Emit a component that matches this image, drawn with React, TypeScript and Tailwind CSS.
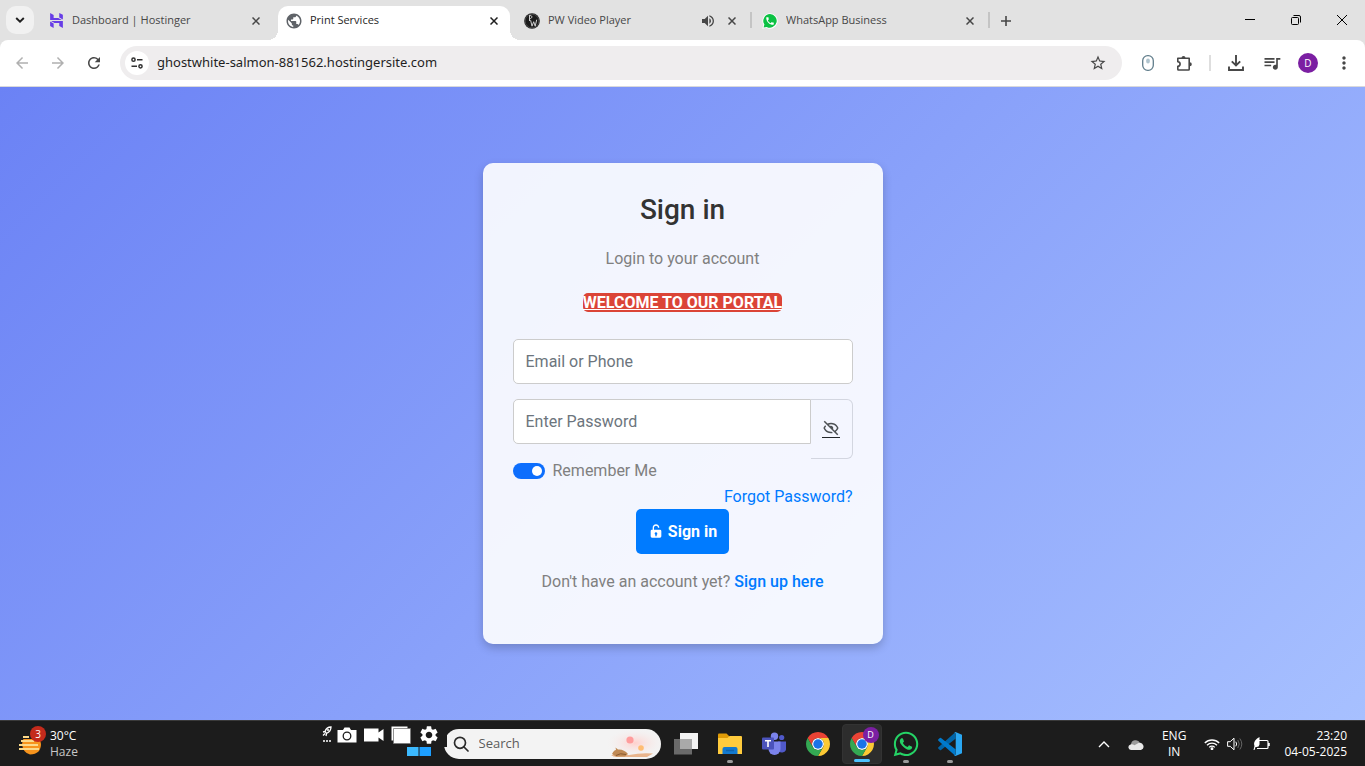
import { useState } from "react";
import type { ReactNode } from "react";
import { clsx } from "clsx";
import { BiHide, BiShow, BiSolidLockOpen } from "react-icons/bi";
import { FaWhatsapp } from "react-icons/fa";
import {
  MdArrowBack,
  MdArrowForward,
  MdMoreVert,
  MdPhone,
  MdPublic,
  MdQueueMusic,
  MdRefresh,
  MdSettings,
  MdStarBorder,
  MdVolumeUp,
} from "react-icons/md";
import { SiHostinger } from "react-icons/si";

interface TabProps {
  title: string;
  icon: ReactNode;
  active?: boolean;
  audible?: boolean;
}

function Tab({ title, icon, active, audible }: TabProps) {
  return (
    <div
      className={clsx(
        "relative flex h-[34px] min-w-0 flex-[0_1_232px] items-center px-2 pb-[5px]",
        active ? "rounded-t-[10px] bg-white text-[#1f1f1f]" : "text-[#474747]"
      )}
    >
      {active && (
        <>
          <span className="absolute bottom-0 -left-2.5 size-2.5 bg-[radial-gradient(circle_at_0_0,transparent_10px,white_10px)]" />
          <span className="absolute -right-2.5 bottom-0 size-2.5 bg-[radial-gradient(circle_at_100%_0,transparent_10px,white_10px)]" />
        </>
      )}
      <span className="flex size-4 flex-none items-center justify-center">{icon}</span>
      <span className="ml-2 flex-1 truncate text-[11px]">{title}</span>
      {audible && <MdVolumeUp className="mr-2 size-4 flex-none" />}
      <button aria-label={`Close ${title}`} className="flex size-4 flex-none items-center justify-center">
        <svg viewBox="0 0 8 8" className="size-2">
          <path d="m.5.5 7 7m0-7-7 7" stroke="currentColor" strokeWidth="1.5" />
        </svg>
      </button>
    </div>
  );
}

function TabDivider({ hidden }: { hidden?: boolean }) {
  return (
    <div className="flex h-[34px] w-1.5 flex-none justify-center pb-[5px]">
      <span className={clsx("mt-1.5 h-4 w-0.5", hidden ? "bg-transparent" : "bg-[#c4c4c4]")} />
    </div>
  );
}

function PwIcon() {
  return (
    <svg viewBox="0 0 16 16" className="size-4 flex-none">
      <circle cx="8" cy="8" r="7.800" fill="#1b1b1b" />
      <circle cx="8" cy="8" r="6.900" fill="none" stroke="#777" strokeWidth=".5" />
      <path d="M5.500 2.500v5.500M5 2.700c3.500-1 4 2.700.5 3.100M6.600 7.200l1.400 6 1.700-4.500 1.500 4.500 1.500-6.500" fill="none" stroke="#d0d0d0" strokeWidth="1" />
    </svg>
  );
}

function WhatsAppFavicon() {
  return (
    <span className="relative flex size-4 items-center justify-center">
      <svg viewBox="0 0 16 16" className="absolute inset-0 size-4">
        <path d="M8 .3a7.700 7.700 0 1 1-3.600 14.500L.3 15.800l1.100-4A7.700 7.700 0 0 1 8 .3z" fill="#fff" />
        <path d="M8 1.100a6.800 6.800 0 1 1-3.300 12.800l-3.100.7.800-3A6.800 6.800 0 0 1 8 1.100z" fill="#0bc143" />
      </svg>
      <MdPhone className="relative size-[10px] text-white" />
    </span>
  );
}

function TabStrip() {
  return (
    <div className="flex h-10 items-end bg-[#e2e2e2] pl-1.5">
      <button aria-label="Search tabs" className="mb-1.5 flex size-7 flex-none items-center justify-center rounded-[10px] bg-[#f1f1f1]">
        <svg viewBox="0 0 10 6" className="h-1.5 w-2.5">
          <path d="M1.200 1 5 4.700 8.800 1" fill="none" stroke="#1f1f1f" strokeWidth="1.900" />
        </svg>
      </button>
      <div className="flex min-w-0 flex-1 items-center pl-1.5">
        <Tab title="Dashboard | Hostinger" icon={<SiHostinger className="size-[15px] text-[#673de6]" />} />
        <TabDivider hidden />
        <Tab title="Print Services" active icon={<MdPublic className="size-[18px] flex-none text-[#5f6368]" />} />
        <TabDivider hidden />
        <Tab title="PW Video Player" audible icon={<PwIcon />} />
        <TabDivider />
        <Tab title="WhatsApp Business" icon={<WhatsAppFavicon />} />
        <TabDivider />
        <button aria-label="New tab" className="mb-[5px] flex size-7 flex-none items-center justify-center">
          <svg viewBox="0 0 10 10" className="size-2.5">
            <path d="M5 0v10M0 5h10" stroke="#474747" strokeWidth="1.600" />
          </svg>
        </button>
      </div>
      <div className="flex h-10 flex-none text-black">
        <button aria-label="Minimize" className="flex w-[46px] items-center justify-center">
          <svg viewBox="0 0 10 10" className="size-2.5"><path d="M0 4.500h10" stroke="currentColor" /></svg>
        </button>
        <button aria-label="Restore" className="flex w-[46px] items-center justify-center">
          <svg viewBox="0 0 10 10" className="size-2.5" fill="none" stroke="currentColor">
            <rect x=".5" y="2.500" width="7" height="7" rx="1" />
            <path d="M2.500.5H8A1.500 1.500 0 0 1 9.500 2v5.500" />
          </svg>
        </button>
        <button aria-label="Close window" className="flex w-[46px] items-center justify-center">
          <svg viewBox="0 0 10 10" className="size-2.5"><path d="m0 0 10 10M10 0 0 10" stroke="currentColor" /></svg>
        </button>
      </div>
    </div>
  );
}

function ToolButton({ label, children, dim }: { label: string; children: ReactNode; dim?: boolean }) {
  return (
    <button
      aria-label={label}
      className={clsx("flex size-7 flex-none items-center justify-center", dim ? "text-[#b0b0b0]" : "text-[#474747]")}
    >
      {children}
    </button>
  );
}

function Toolbar() {
  return (
    <div className="bg-[#e2e2e2]">
      <div className="flex h-[47px] items-center gap-2 rounded-t-lg border-b border-[#d9d9dc] bg-white pr-[7px] pl-2">
        <ToolButton label="Back" dim><MdArrowBack className="size-[18px]" /></ToolButton>
        <ToolButton label="Forward" dim><MdArrowForward className="size-[18px]" /></ToolButton>
        <ToolButton label="Reload"><MdRefresh className="size-[18px]" /></ToolButton>
        <div className="mx-1 flex h-[34px] min-w-0 flex-1 items-center rounded-full bg-[#efedee] pr-[10px] pl-[5px]">
          <button aria-label="View site information" className="flex size-6 flex-none items-center justify-center rounded-full bg-white">
            <svg viewBox="0 0 12 12" className="size-3" fill="none" stroke="#303030" strokeWidth="1.500">
              <circle cx="2.500" cy="2.700" r="1.600" />
              <path d="M6 2.700h5.500M.5 9.300H6" />
              <circle cx="9.500" cy="9.300" r="1.600" />
            </svg>
          </button>
          <input
            aria-label="Address"
            defaultValue="ghostwhite-salmon-881562.hostingersite.com"
            className="ml-2 min-w-0 flex-1 bg-transparent font-['Noto_Sans',sans-serif] text-[13px] text-[#1f1f1f] outline-none"
          />
          <ToolButton label="Bookmark this tab"><MdStarBorder className="size-[18px]" /></ToolButton>
        </div>
        <ToolButton label="Mouse extension">
          <svg viewBox="0 0 12 16" className="h-4 w-3">
            <rect x=".7" y=".7" width="10.600" height="14.600" rx="5" fill="#fff" stroke="#607d8b" strokeWidth="1.300" />
            <rect x="4.200" y="3.500" width="3.600" height="5" rx="1.800" fill="#b0c4ce" />
          </svg>
        </ToolButton>
        <ToolButton label="Extensions">
          <svg viewBox="0 0 16 16" className="size-4">
            <path d="M1.800 3.300H13.200v11q0 .7-.7.7H2.500q-.7 0-.7-.7v-3a2.200 2.200 0 0 0 0-4.600z" fill="none" stroke="currentColor" strokeWidth="1.600" strokeLinejoin="round" />
            <path d="M5.500 3a2 2 0 0 1 4 0zM13.800 7.200a2 2 0 0 1 0 4z" fill="currentColor" />
          </svg>
        </ToolButton>
        <span className="flex w-2 justify-center"><span className="h-4 w-0.5 bg-[#dedede]" /></span>
        <ToolButton label="Downloads">
          <svg viewBox="0 0 16 16" className="size-4" fill="none" stroke="currentColor" strokeWidth="1.900">
            <path d="M8 0v10.500M3.800 6.300 8 10.500l4.200-4.200M1 11.500V15h14v-3.500" />
          </svg>
        </ToolButton>
        <ToolButton label="Media controls"><MdQueueMusic className="size-5" /></ToolButton>
        <ToolButton label="Profile">
          <span className="flex size-5 items-center justify-center rounded-full bg-[#7b1fa2] text-[10px] text-white">D</span>
        </ToolButton>
        <ToolButton label="Menu"><MdMoreVert className="size-5" /></ToolButton>
      </div>
    </div>
  );
}

function SignInCard() {
  const [showPassword, setShowPassword] = useState(false);

  return (
    <form
      onSubmit={(e) => e.preventDefault()}
      className="w-full max-w-[400px] rounded-[10px] bg-white/90 px-[30px] pt-[30px] pb-[50px] text-base leading-6 text-[#808080] shadow-[0_4px_10px_rgba(0,0,0,0.2)]"
    >
      <h1 className="text-center text-[28px] leading-[34px] font-medium text-[#333]">Sign in</h1>
      <p className="mt-5 text-center">Login to your account</p>
      <p className="mt-5 text-center">
        <b className="rounded-[5px] bg-[#db4437] font-bold text-white underline">WELCOME TO OUR PORTAL</b>
      </p>

      <input
        type="text"
        aria-label="Email or Phone"
        placeholder="Email or Phone"
        className="mt-6 block h-[45px] w-full rounded-[5px] border border-[#ccc] bg-white px-3 text-[#212529] outline-none placeholder:text-[#6c757d]"
      />
      <div className="mt-[15px] flex items-start">
        <input
          type={showPassword ? "text" : "password"}
          aria-label="Enter Password"
          placeholder="Enter Password"
          className="relative h-[45px] min-w-0 flex-1 rounded-l-[5px] border border-[#ccc] bg-white px-3 text-[#212529] outline-none placeholder:text-[#6c757d]"
        />
        <button
          type="button"
          aria-label="Toggle password visibility"
          onClick={() => setShowPassword(!showPassword)}
          className="flex h-[60px] w-[42px] flex-none items-center justify-center rounded-r-md border border-l-0 border-[#d3d6e0] pb-0.5 text-[#4d5154]"
        >
          <span className="border-b border-[#212529]">
            {showPassword ? <BiShow className="size-[18px]" /> : <BiHide className="size-[18px]" />}
          </span>
        </button>
      </div>

      <div className="flex items-center">
        <input
          id="remember"
          type="checkbox"
          role="switch"
          defaultChecked
          className="h-4 w-8 appearance-none rounded-full bg-gray-400 before:m-[3px] before:block before:size-[10px] before:rounded-full before:bg-white before:content-[''] checked:bg-[#0d6efd] checked:before:ml-[19px]"
        />
        <label htmlFor="remember" className="pl-2">Remember Me</label>
      </div>
      <div className="mt-0.5 text-right">
        <a href="#forgot" className="text-[#007bff]">Forgot Password?</a>
      </div>
      <div className="flex justify-center">
        <button type="submit" className="flex h-[45px] items-center gap-1 rounded-[5px] bg-[#007bff] px-3 font-bold text-white">
          <BiSolidLockOpen className="mb-0.5 size-4" />
          Sign in
        </button>
      </div>
      <p className="mt-4 text-center">
        Don't have an account yet? <a href="#signup" className="font-medium text-[#007bff]">Sign up here</a>
      </p>
    </form>
  );
}

function ChromeLogo() {
  return (
    <svg viewBox="0 0 48 48" className="size-6">
      <circle cx="24" cy="24" r="12" fill="#fff" />
      <path d="M24 12h20.780A24 24 0 0 0 3.220 12L13.610 30A12 12 0 0 1 24 12z" fill="#ea4335" />
      <path d="M34.390 30 24 48a24 24 0 0 0 20.780-36H24a12 12 0 0 1 10.390 18z" fill="#fcc934" />
      <path d="M13.610 30 3.220 12A24 24 0 0 0 24 48l10.390-18a12 12 0 0 1-20.780 0z" fill="#34a853" />
      <circle cx="24" cy="24" r="9.500" fill="#1a73e8" />
    </svg>
  );
}

function TeamsLogo() {
  return (
    <svg viewBox="0 0 24 24" className="size-6">
      <circle cx="19.700" cy="5.500" r="2.600" fill="#5059c9" />
      <path d="M16 9.500h8v6.500a4 4 0 0 1-8 1z" fill="#5059c9" />
      <circle cx="12.500" cy="4.200" r="3.700" fill="#7b83eb" />
      <path d="M6.500 9.500h12V17a6 6 0 0 1-12 0z" fill="#7b83eb" />
      <rect y="5.500" width="12" height="12" rx="1" fill="#4b53bc" />
      <path d="M3 8.700h6M6 8.700v6.300" stroke="#fff" strokeWidth="1.600" />
    </svg>
  );
}

function VsCodeLogo() {
  return (
    <svg viewBox="0 0 24 24" className="size-6">
      <path d="M.4 15.300 17.500 0v6.800L3 18.100q-.6.400-1.100 0L.4 16.700q-.6-.7 0-1.400z" fill="#0065a9" />
      <path d="M.4 8.700 17.500 24v-6.800L3 5.900q-.6-.4-1.100 0L.4 7.300q-.6.700 0 1.400z" fill="#007acc" />
      <path d="M17.500 0 24 2.800v18.400L17.500 24q-1 0-1.500-.6 1.500.4 1.700-1.200V1.800Q17.500.2 16 .6q.5-.6 1.500-.6z" fill="#2aa7f2" />
    </svg>
  );
}

function FolderIcon() {
  return (
    <svg viewBox="0 0 24 24" className="size-6">
      <path d="M0 2.500Q0 1.500 1 1.500h7.500L11 4v3H0z" fill="#e09b07" />
      <path d="M0 6h9.500l2-2H23q1 0 1 1v17H0z" fill="#ffcb3d" />
      <path d="M4.500 22v-5q0-2 2-2h11q2 0 2 2v5z" fill="#1279cf" />
      <path d="M8 18.500h8" stroke="#0f62ab" strokeWidth="1.500" />
    </svg>
  );
}

interface TaskButtonProps {
  label: string;
  children: ReactNode;
  running?: boolean;
  active?: boolean;
}

function TaskButton({ label, children, running, active }: TaskButtonProps) {
  return (
    <button
      aria-label={label}
      className={clsx(
        "relative flex size-10 flex-none items-center justify-center rounded",
        active && "border border-[#333] bg-[#2d2d2d]"
      )}
    >
      {children}
      {running && (
        <span
          className={clsx(
            "absolute bottom-px left-1/2 h-[3px] -translate-x-1/2 rounded-full",
            active ? "w-4 bg-[#4cc2ff]" : "w-1.5 bg-[#9a9a9a]"
          )}
        />
      )}
    </button>
  );
}

function Weather() {
  return (
    <div className="flex items-center pl-[18px]">
      <div className="relative size-6">
        <svg viewBox="0 0 24 24" className="size-6">
          <path d="M4 12a9.500 9.500 0 0 1 19 0q0 10-11 10.500Q5 21 4 12z" fill="#f7941d" />
          <path d="M3 0h21v7H3z" fill="#1c1c1c" />
          <path d="M5 5h6M3 9h13M1 13h19M1 17h20" stroke="#fbd98a" strokeWidth="1.800" />
        </svg>
        <span className="absolute -top-1.5 left-3 flex size-4 items-center justify-center rounded-full bg-[#c42b1c] text-[10px] text-white">3</span>
      </div>
      <div className="ml-2 text-xs leading-4">
        <div className="text-white">30°C</div>
        <div className="text-[#c8c8c8]">Haze</div>
      </div>
    </div>
  );
}

// Floating capture tools that sit on top of the start button
function CaptureTools() {
  return (
    <div className="absolute -top-px -right-2 flex h-6 items-center gap-[7px] bg-[#1c1c1c] pr-[7px] text-white">
      <svg viewBox="0 0 10 18" className="h-[18px] w-2.5" fill="none" stroke="#fff">
        <path d="M3 5.500Q4.500 1 9 1q0 4.500-4.500 6.500zM3 5.500l-2 .5M4.500 7.500 4 10M1 9.500l2-2" strokeWidth="1.300" />
        <circle cx="6" cy="4" r=".8" />
        <path d="M1 15h2M4 15h2M7 15h2" strokeWidth="1.600" />
      </svg>
      <svg viewBox="0 0 20 16" className="-ml-0.5 h-4 w-5">
        <path d="M.5 3H6l1.500-2.500h5L14 3h5.500v12.500H.5z" fill="#fff" />
        <circle cx="10" cy="9" r="3.800" fill="none" stroke="#1c1c1c" strokeWidth="1.300" />
      </svg>
      <svg viewBox="0 0 20 14" className="h-3.5 w-5">
        <path d="M0 .5h14.500v4L19.500 1v12l-5-3.500v4H0z" fill="#fff" />
      </svg>
      <svg viewBox="0 0 20 18" className="h-[18px] w-5">
        <path d="M.5.5h16v14H.5z" fill="#fff" />
        <path d="M2.500 2.500h17v15h-17z" fill="#fff" stroke="#777" strokeWidth=".8" />
      </svg>
      <MdSettings className="size-[22px]" />
    </div>
  );
}

function SearchBox() {
  return (
    <div className="mx-[5px] flex h-[30px] w-[217px] items-center overflow-hidden rounded-full bg-[#f3f3f3] pl-[9px]">
      <svg viewBox="0 0 16 16" className="size-4 flex-none" fill="none" stroke="#2b2b2b" strokeWidth="1.700">
        <circle cx="7" cy="6.800" r="5.500" />
        <path d="m11 11 4 4" strokeLinecap="round" />
      </svg>
      <input
        aria-label="Search"
        placeholder="Search"
        className="ml-2.5 min-w-0 flex-1 bg-transparent text-[13px] outline-none placeholder:text-[#5c5c5c]"
      />
      <svg viewBox="0 0 54 30" className="h-[30px] w-[54px] flex-none">
        <defs>
          <radialGradient id="glow">
            <stop offset="0" stopColor="#ffd0cc" />
            <stop offset="1" stopColor="#f3f3f3" stopOpacity="0" />
          </radialGradient>
        </defs>
        <ellipse cx="28" cy="14" rx="30" ry="15" fill="url(#glow)" />
        <circle cx="23" cy="11" r="3.600" fill="#ff9c9c" />
        <circle cx="34" cy="19" r="2.800" fill="#ffbd73" />
        <path d="M4 26h18q12-2.500 24-1.500l-6 3.500H10q-4 0-6-2z" fill="#e9b48c" />
        <path d="M5 25q2-4 4-4l-.5-2.500 2.500 2q6-.5 10 4.500l-3 2.500H9z" fill="#c08a55" />
        <path d="M9 26.500q4-3 10-1" fill="none" stroke="#8a5a30" />
      </svg>
    </div>
  );
}

function Tray() {
  return (
    <div className="flex items-center justify-end pr-[18px] text-white">
      <svg viewBox="0 0 12 7" className="h-[7px] w-3"><path d="M1 6l5-5 5 5" fill="none" stroke="#fff" strokeWidth="1.400" /></svg>
      <svg viewBox="0 0 16 11" className="ml-[18px] h-[11px] w-4">
        <path d="M3 6a4.700 4.700 0 0 1 9-2l-5 4z" fill="#9b9b9b" />
        <path d="M3 11a2.800 2.800 0 0 1-.5-5.500q2-.6 4 .8L10.500 4A3.600 3.600 0 0 1 13 11z" fill="#e8e8e8" />
      </svg>
      <div className="ml-[18px] text-center text-xs leading-4">
        <div>ENG</div>
        <div>IN</div>
      </div>
      <svg viewBox="0 0 16 12" className="ml-[18px] h-3 w-4" fill="none" stroke="#fff" strokeWidth="1.300">
        <path d="M.8 5a10.200 10.200 0 0 1 14.400 0M3 7.300a7 7 0 0 1 10 0M5.200 9.400a4 4 0 0 1 5.600 0" />
        <circle cx="8" cy="10.700" r=".8" fill="#fff" />
      </svg>
      <svg viewBox="0 0 16 14" className="ml-[7px] h-3.5 w-4" fill="none" stroke="#fff">
        <path d="M.6 4.700h2.600L7 1.200v11.600L3.200 9.300H.6z" />
        <path d="M8.800 4.700q1.700 2.300 0 4.600" />
        <path d="M10.800 3q3 4 0 8M12.800 1.500q4 5.500 0 11" stroke="#666" />
      </svg>
      <svg viewBox="0 0 17 14" className="ml-2.5 h-3.5 w-[17px]">
        <path d="M6 3.500h8q1 0 1 1v6q0 1-1 1H4M15.200 6.500h1v2h-1" fill="none" stroke="#fff" strokeWidth="1.200" />
        <path d="M6.500 0v7.500q-.5 3-4 2.500L1.500 13H.5l1-4Q-.5 4 6.500 0z" fill="#fff" />
      </svg>
      <div className="ml-3.5 text-right text-xs leading-4">
        <div>23:20</div>
        <div>04-05-2025</div>
      </div>
    </div>
  );
}

function Taskbar() {
  return (
    <footer className="grid h-[46px] grid-cols-[1fr_auto_1fr] items-center border-t border-[#3a3a3a] bg-[#1c1c1c] pt-px">
      <Weather />
      <div className="flex items-center pl-[3px]">
        <div className="relative z-10">
          <TaskButton label="Start">
            <svg viewBox="0 0 24 24" className="size-6">
              <path d="M0 0h11.500v11.500H0zM0 12.500h11.500V24H0z" fill="#3cbaff" />
              <path d="M12.500 0H24v11.500H12.500zM12.500 12.500H24V24H12.500z" fill="#1d9fff" />
            </svg>
          </TaskButton>
          <CaptureTools />
        </div>
        <SearchBox />
        <div className="flex gap-1">
          <TaskButton label="Task view">
            <svg viewBox="0 0 24 24" className="size-6">
              <path d="M6 1h18v16H6z" fill="#f2f2f2" />
              <path d="M0 7h18v15.500H0z" fill="#6a6a6a" />
              <path d="M6 7h12v10H6z" fill="#a9a9a9" />
            </svg>
          </TaskButton>
          <TaskButton label="File Explorer" running><FolderIcon /></TaskButton>
          <TaskButton label="Teams"><TeamsLogo /></TaskButton>
          <TaskButton label="Chrome"><ChromeLogo /></TaskButton>
          <TaskButton label="Chrome, profile D" running active>
            <ChromeLogo />
            <span className="absolute top-0.5 right-0.5 flex size-4 items-center justify-center rounded-full bg-[#7b1fa2] text-[9px] text-white">D</span>
          </TaskButton>
          <TaskButton label="WhatsApp" running><FaWhatsapp className="size-7 text-[#25d366]" /></TaskButton>
          <TaskButton label="Visual Studio Code" running><VsCodeLogo /></TaskButton>
        </div>
      </div>
      <Tray />
    </footer>
  );
}

export default function App() {
  return (
    <div className="flex min-h-screen flex-col font-['Open_Sans',sans-serif]">
      <header>
        <TabStrip />
        <Toolbar />
      </header>
      <main className="flex flex-1 items-center justify-center bg-[linear-gradient(135deg,#6b82f5,#a7c0ff)] font-['Roboto',sans-serif]">
        <SignInCard />
      </main>
      <Taskbar />
    </div>
  );
}
